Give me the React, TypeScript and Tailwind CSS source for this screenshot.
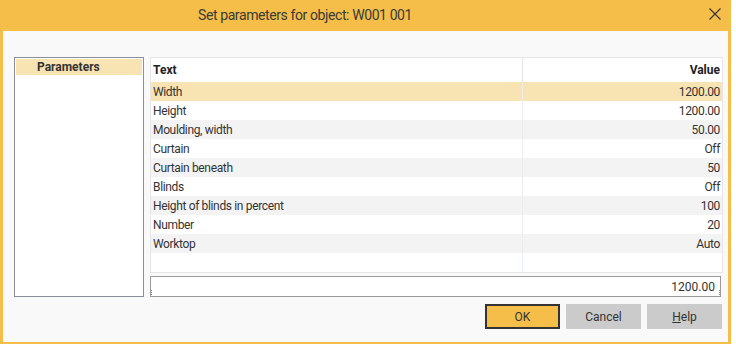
import React from "react";

const rows: [string, string][] = [
  ["Width", "1200.00"],
  ["Height", "1200.00"],
  ["Moulding, width", "50.00"],
  ["Curtain", "Off"],
  ["Curtain beneath", "50"],
  ["Blinds", "Off"],
  ["Height of blinds in percent", "100"],
  ["Number", "20"],
  ["Worktop", "Auto"],
];

export default function App() {
  return (
    <div className="w-[736px] h-[345px] bg-white" style={{ fontFamily: 'Roboto, sans-serif' }}>
      <div className="w-[731px] h-[344px] flex flex-col bg-[#f4be48]">
        <div className="h-[31px] flex items-center relative shrink-0">
          <div className="pl-[198px] text-[14px] tracking-[-0.4px] text-[#3a3a3a]">Set parameters for object: W001 001</div>
          <svg className="absolute left-[709px] top-[8px]" width="12" height="12" viewBox="0 0 12 12">
            <path d="M0.5 0.5 L11.5 11.5 M11.5 0.5 L0.5 11.5" stroke="#333" strokeWidth="1.1" />
          </svg>
        </div>
        <div className="flex-1 mx-[3px] mb-[2px] bg-[#f9f9f9] flex flex-col">
          <div className="flex pt-[26px] pl-[11px] gap-[6px]">
            <div className="w-[130px] h-[240px] border border-[#8a9099] bg-white p-[1px]">
              <div className="h-[16px] bg-[#f8e3b3] flex items-center pl-[21px] text-[12px] font-bold text-[#333]">Parameters</div>
            </div>
            <div className="flex flex-col w-[573px]">
              <div className="h-[216px] border border-[#e6e6e6] bg-white flex flex-col">
                <div className="h-[24px] flex text-[12px] font-bold text-[#222] shrink-0">
                  <div className="w-[372px] pl-[2px] flex items-center border-r border-[#e6e6e6]">Text</div>
                  <div className="flex-1 pr-[2px] flex items-center justify-end">Value</div>
                </div>
                {rows.map(([t, v], i) => (
                  <div
                    key={t}
                    className={
                      "h-[19px] flex text-[12px] tracking-[-0.35px] text-[#333] shrink-0 " +
                      (i === 0 ? "bg-[#f8e3b3]" : i % 2 === 0 ? "bg-[#f3f3f3]" : "bg-white")
                    }
                  >
                    <div className="w-[372px] pl-[2px] flex items-center border-r border-[#ececec]">{t}</div>
                    <div className="flex-1 pr-[2px] flex items-center justify-end">{v}</div>
                  </div>
                ))}
                <div className="flex-1 flex">
                  <div className="w-[372px] border-r border-[#e6eef8]"></div>
                </div>
              </div>
              <div className="mt-[3px] h-[21px] w-[571px] border border-[#9a9a9a] bg-white flex items-center justify-end pr-[5px] text-[12px] text-[#333] relative">
                1200.00
                <span className="absolute right-[0px] bottom-[1px] w-[1px] h-[5px] border-r border-dotted border-[#888]"></span>
                <span className="absolute left-[0px] bottom-[1px] w-[1px] h-[5px] border-l border-dotted border-[#888]"></span>
              </div>
            </div>
          </div>
          <div className="flex justify-end gap-[6px] pr-[6px] mt-[7px] text-[12px] text-[#333]">
            <button className="w-[75px] h-[25px] bg-[#f4be48] border-2 border-[#333] flex items-center justify-center">OK</button>
            <button className="w-[75px] h-[25px] bg-[#cbcbcb] flex items-center justify-center">Cancel</button>
            <button className="w-[75px] h-[25px] bg-[#cbcbcb] flex items-center justify-center">
              <span><span className="underline">H</span>elp</span>
            </button>
          </div>
        </div>
      </div>
    </div>
  );
}
